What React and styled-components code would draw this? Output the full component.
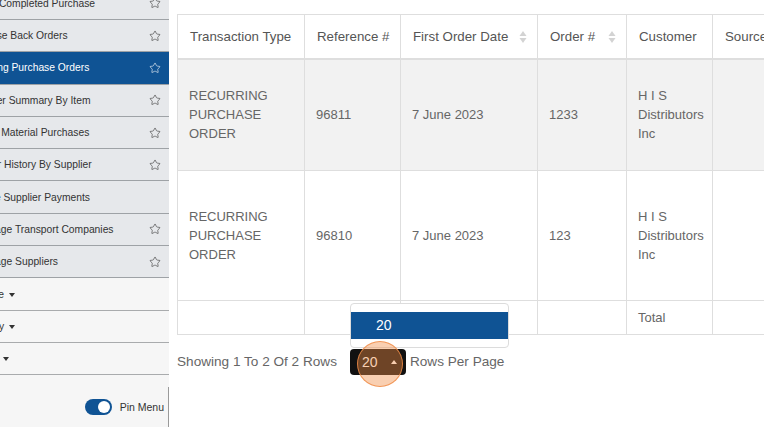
import React from "react";
import styled, { createGlobalStyle } from "styled-components";
import { Star } from "lucide-react";

const GlobalStyle = createGlobalStyle`
  html, body {
    margin: 0;
    padding: 0;
    background: #ffffff;
    font-family: "Liberation Sans", Arial, sans-serif;
  }
`;

const Page = styled.div`
  display: flex;
  width: 764px;
  height: 427px;
  overflow: hidden;
  background: #fff;
`;

const Sidebar = styled.aside`
  width: 169px;
  flex-shrink: 0;
  display: flex;
  flex-direction: column;
  background: #f6f6f6;
  overflow: hidden;
`;

// the menu is scrolled sideways, so labels start left of the visible edge
const MenuList = styled.ul`
  list-style: none;
  margin: -12.3px 0 0 -36px;
  padding: 0;
  width: 205px;
`;

const MenuItem = styled.li`
  height: 32.3px;
  border-bottom: 1px solid ${(p) => (p.$group ? "#a9abad" : "#9ea2a6")};
  display: flex;
  align-items: center;
  justify-content: space-between;
  padding: 0 8px 0 ${(p) => (p.$nested ? 11 : 0)}px;
  font-size: 10.3px;
  white-space: nowrap;
  color: ${(p) => (p.$active ? "#fff" : "#333")};
  background: ${(p) => (p.$active ? "#0f5394" : p.$group ? "#f6f6f6" : "#e6e8eb")};
  box-sizing: border-box;
`;

const Caret = styled.span`
  display: inline-block;
  width: 0;
  height: 0;
  margin-left: 5px;
  vertical-align: middle;
  border-left: 3px solid transparent;
  border-right: 3px solid transparent;
  border-top: ${(p) => (p.$up ? "none" : "4px solid currentColor")};
  border-bottom: ${(p) => (p.$up ? "4px solid currentColor" : "none")};
`;

const PinArea = styled.div`
  margin-top: auto;
  height: 40px;
  display: flex;
  align-items: center;
  justify-content: flex-end;
  gap: 8px;
  padding-right: 4px;
  border-right: 1px solid #9a9a9a;
  font-size: 10.5px;
  color: #333;
`;

const Toggle = styled.span`
  width: 27px;
  height: 16px;
  border-radius: 8px;
  background: #0f5394;
  display: flex;
  align-items: center;
  justify-content: flex-end;
  padding: 0 2px;
  box-sizing: border-box;
  &::after {
    content: "";
    width: 12px;
    height: 12px;
    border-radius: 50%;
    background: #fff;
  }
`;

const Main = styled.main`
  flex: 1;
  min-width: 0;
  padding: 14px 0 0 8px;
  overflow: hidden;
`;

const Table = styled.table`
  border-collapse: collapse;
  table-layout: fixed;
  width: 655px;
  font-size: 13px;
  color: #666;
`;

const Th = styled.th`
  height: 43px;
  padding: 0 10px 0 12px;
  border: 1px solid #dedede;
  border-bottom: 2px solid #dedede;
  font-weight: normal;
  font-size: 13.3px;
  text-align: left;
  color: #555;
  white-space: nowrap;
`;

const ThInner = styled.div`
  display: flex;
  align-items: center;
  justify-content: space-between;
`;

const Row = styled.tr`
  height: ${(p) => p.$h}px;
  background: ${(p) => (p.$shade ? "#f2f2f2" : "#fff")};
`;

const Td = styled.td`
  padding: 0 10px 0 11px;
  border: 1px solid #dedede;
  line-height: 19px;
  vertical-align: middle;
`;

const Pager = styled.div`
  display: flex;
  align-items: center;
  margin-top: 14px;
  height: 26px;
  font-size: 13.6px;
  color: #666;
`;

const SelectWrap = styled.div`
  position: relative;
  margin: 0 4px 0 13px;
`;

const SelectButton = styled.button`
  width: 56px;
  height: 26px;
  border: none;
  border-radius: 4px;
  background: #111;
  color: #fff;
  font-family: inherit;
  font-size: 14px;
  display: flex;
  align-items: center;
  padding: 0 0 0 12px;
  gap: 8px;
`;

const Menu = styled.div`
  position: absolute;
  left: 0;
  bottom: calc(100% + 1px);
  width: 159px;
  padding: 8px 0;
  background: #fff;
  border: 1px solid #dcdcdc;
  border-radius: 4px;
  box-sizing: border-box;
`;

const MenuOption = styled.div`
  height: 27px;
  display: flex;
  align-items: center;
  padding-left: 25px;
  background: ${(p) => (p.$selected ? "#0f5394" : "transparent")};
  color: ${(p) => (p.$selected ? "#fff" : "#333")};
  font-size: 14px;
`;

const ClickRing = styled.span`
  position: absolute;
  left: 7px;
  top: -8px;
  width: 46px;
  height: 46px;
  border-radius: 50%;
  background: rgba(240, 140, 70, 0.42);
  border: 1.5px solid rgba(240, 140, 70, 0.85);
  box-sizing: border-box;
  pointer-events: none;
`;

const SortIcon = () => (
  <svg width="8" height="14" viewBox="0 0 8 14">
    <path d="M4 1 L7.5 6 H0.5 Z" fill="#d3d3d3" />
    <path d="M4 13 L7.5 8 H0.5 Z" fill="#d3d3d3" />
  </svg>
);

const menu = [
  { label: "Extract Completed Purchase", star: true },
  { label: "Purchase Back Orders", star: true },
  { label: "Recurring Purchase Orders", star: true, active: true },
  { label: "Producer Summary By Item", star: true },
  { label: "Internal Material Purchases", star: true },
  { label: "Reorder History By Supplier", star: true },
  { label: "Prepare Supplier Payments" },
  { label: "Manage Transport Companies", star: true, nested: true },
  { label: "Manage Suppliers", star: true, nested: true },
  { label: "Expense", group: true },
  { label: "Treasury", group: true },
  { label: "System", group: true },
];

const columns = [
  { title: "Transaction Type", w: 127 },
  { title: "Reference #", w: 96 },
  { title: "First Order Date", w: 137, sort: true },
  { title: "Order #", w: 89, sort: true },
  { title: "Customer", w: 86 },
  { title: "Source", w: 120 },
];

const rows = [
  { ref: "96811", date: "7 June 2023", order: "1233", h: 111, shade: true },
  { ref: "96810", date: "7 June 2023", order: "123", h: 130 },
];

export default function App() {
  return (
    <Page>
      <GlobalStyle />
      <Sidebar>
        <MenuList>
          {menu.map((m) => (
            <MenuItem key={m.label} $active={m.active} $group={m.group} $nested={m.nested}>
              <span>
                {m.label}
                {m.group && <Caret />}
              </span>
              {m.star && <Star size={12} strokeWidth={1.2} />}
            </MenuItem>
          ))}
        </MenuList>
        <PinArea>
          <Toggle />
          Pin Menu
        </PinArea>
      </Sidebar>
      <Main>
        <Table>
          <colgroup>
            {columns.map((c) => (
              <col key={c.title} style={{ width: c.w }} />
            ))}
          </colgroup>
          <thead>
            <tr>
              {columns.map((c) => (
                <Th key={c.title}>
                  <ThInner>
                    {c.title}
                    {c.sort && <SortIcon />}
                  </ThInner>
                </Th>
              ))}
            </tr>
          </thead>
          <tbody>
            {rows.map((r) => (
              <Row key={r.ref} $h={r.h} $shade={r.shade}>
                <Td>
                  RECURRING
                  <br />
                  PURCHASE
                  <br />
                  ORDER
                </Td>
                <Td>{r.ref}</Td>
                <Td>{r.date}</Td>
                <Td>{r.order}</Td>
                <Td>
                  H I S
                  <br />
                  Distributors
                  <br />
                  Inc
                </Td>
                <Td />
              </Row>
            ))}
            <Row $h={34}>
              <Td />
              <Td />
              <Td />
              <Td />
              <Td>Total</Td>
              <Td />
            </Row>
          </tbody>
        </Table>
        <Pager>
          Showing 1 To 2 Of 2 Rows
          <SelectWrap>
            <Menu>
              <MenuOption $selected>20</MenuOption>
            </Menu>
            <SelectButton>
              20 <Caret $up />
            </SelectButton>
            <ClickRing />
          </SelectWrap>
          Rows Per Page
        </Pager>
      </Main>
    </Page>
  );
}
